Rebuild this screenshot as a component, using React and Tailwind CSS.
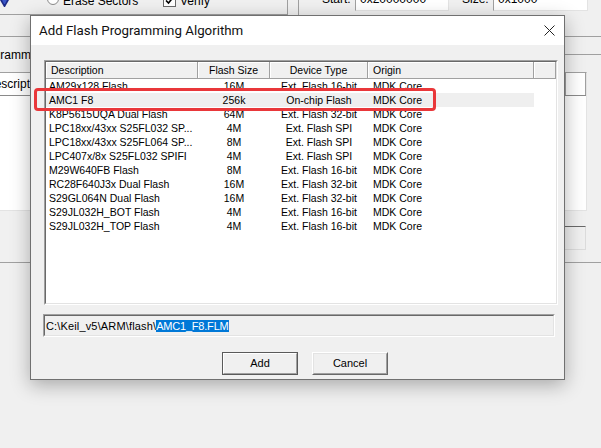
import React from "react";

const rows = [
  ["AM29x128 Flash", "16M", "Ext. Flash 16-bit", "MDK Core"],
  ["AMC1 F8", "256k", "On-chip Flash", "MDK Core"],
  ["K8P5615UQA Dual Flash", "64M", "Ext. Flash 32-bit", "MDK Core"],
  ["LPC18xx/43xx S25FL032 SP...", "4M", "Ext. Flash SPI", "MDK Core"],
  ["LPC18xx/43xx S25FL064 SP...", "8M", "Ext. Flash SPI", "MDK Core"],
  ["LPC407x/8x S25FL032 SPIFI", "4M", "Ext. Flash SPI", "MDK Core"],
  ["M29W640FB Flash", "8M", "Ext. Flash 16-bit", "MDK Core"],
  ["RC28F640J3x Dual Flash", "16M", "Ext. Flash 32-bit", "MDK Core"],
  ["S29GL064N Dual Flash", "16M", "Ext. Flash 32-bit", "MDK Core"],
  ["S29JL032H_BOT Flash", "4M", "Ext. Flash 16-bit", "MDK Core"],
  ["S29JL032H_TOP Flash", "4M", "Ext. Flash 16-bit", "MDK Core"],
];

function HeaderCell({ w, children, className = "" }) {
  return (
    <div
      className={`${w} h-full shrink-0 flex items-center border-r border-b border-r-[#a0a0a0] border-b-[#a0a0a0] shadow-[inset_1px_1px_0_#ffffff] bg-[#f0f0f0] ${className}`}
    >
      {children}
    </div>
  );
}

export default function App() {
  return (
    <div className="relative w-[601px] h-[448px] overflow-hidden bg-[#f0f0f0] text-black font-['Liberation_Sans',Arial,sans-serif]">
      {/* ===== Background window ===== */}
      <div className="flex flex-col">
        {/* top row */}
        <div className="flex h-[15px] text-[12px] leading-[14px]">
          <div className="w-[288px] h-full border-r border-b border-[#a0a0a0] flex items-start">
            <svg width="9" height="8" viewBox="0 0 9 8" className="shrink-0">
              <polygon points="0,0 9,0 5,7 4,7" fill="#1c2a86" />
              <polygon points="2,0 7,0 5,4 4,4" fill="#3a56c8" />
            </svg>
            <div className="ml-[38px] w-[116px] flex items-start">
              <div className="-mt-[7px] w-[12px] h-[12px] rounded-full border border-[#8a8a8a] bg-white shrink-0" />
              <span className="ml-[4px] -mt-[6px]">Erase Sectors</span>
            </div>
            <div className="-mt-[6px] w-[13px] h-[13px] border border-[#6a6a6a] bg-white shrink-0 flex items-center justify-center">
              <svg width="9" height="9" viewBox="0 0 9 9">
                <path d="M1 4.5 L3.5 7 L8 1.5" stroke="#000" strokeWidth="1.6" fill="none" />
              </svg>
            </div>
            <span className="ml-[4px] -mt-[6px]">Verify</span>
          </div>
          <div className="w-[11px] h-full border-r border-[#a0a0a0]" />
          <div className="flex items-start pl-[23px]">
            <span className="w-[33px] -mt-[8px]">Start:</span>
            <div className="w-[94px] h-[20px] -mt-[9px] bg-white border border-t-[#a0a0a0] border-l-[#a0a0a0] border-r-[#e3e3e3] border-b-[#e3e3e3] flex items-end pl-[4px] pb-[4px]">
              0x20000000
            </div>
            <span className="ml-[13px] w-[31px] -mt-[8px]">Size:</span>
            <div className="w-[95px] h-[20px] -mt-[9px] bg-white border border-t-[#a0a0a0] border-l-[#a0a0a0] border-r-[#e3e3e3] border-b-[#e3e3e3] flex items-end pl-[4px] pb-[4px]">
              0x1000
            </div>
          </div>
        </div>
        {/* group bottom line */}
        <div className="h-[22px] border-b border-[#a0a0a0]" />
        {/* group label row */}
        <div className="h-[35px] flex items-center text-[12px]">
          <span className="-ml-[25px] whitespace-nowrap">Programming Algorithm</span>
          <div className="ml-[6px] flex-1 h-px bg-[#a0a0a0]" />
        </div>
        {/* background list view */}
        <div className="-ml-[20px] w-[607px] h-[139px] border border-t-[#a0a0a0] border-l-[#a0a0a0] border-r-[#e3e3e3] border-b-[#e3e3e3] bg-white flex flex-col">
          <div className="h-[23px] flex text-[12px] border-b border-[#8a8a8a]">
            <div className="flex-1 flex items-center pl-[5px] border-r border-[#a0a0a0]">Description</div>
            <div className="w-[20px] border-r border-[#a0a0a0]" />
          </div>
          <div className="flex-1 bg-white" />
        </div>
        <div className="mt-[15px] flex">
          <div className="ml-[511px] w-[75px] h-[24px] border border-[#dcdcdc] border-t-[#696969] bg-[#f0f0f0]" />
        </div>
        <div className="mt-[12px] border-t border-[#a0a0a0] h-px bg-white" />
      </div>

      {/* ===== Dialog ===== */}
      <div className="absolute left-[30px] top-[15px] w-[535px] h-[365px] border border-[#707070] bg-[#f0f0f0] shadow-[0_5px_18px_rgba(0,0,0,0.3)] flex flex-col">
        {/* Title bar */}
        <div className="h-[29px] shrink-0 bg-white flex items-center justify-between pl-[8px] pr-[9px]">
          <span className="text-[13.3px] leading-[18px] pt-[1px] font-['Roboto',sans-serif] text-[#111]">
            Add Flash Programming Algorithm
          </span>
          <svg width="11" height="11" viewBox="0 0 11 11">
            <path d="M0.5 0.5 L10.5 10.5 M10.5 0.5 L0.5 10.5" stroke="#222" strokeWidth="1" />
          </svg>
        </div>

        {/* Body */}
        <div className="flex-1 flex flex-col">
          {/* List view */}
          <div className="ml-[13px] mt-[15px] w-[514px] h-[245px] border border-t-[#a0a0a0] border-l-[#a0a0a0] border-r-white border-b-white">
            <div className="w-full h-full border border-t-[#696969] border-l-[#696969] border-r-[#e3e3e3] border-b-[#e3e3e3] bg-white flex flex-col text-[10.5px] leading-[14px]">
              <div className="h-[17px] flex shrink-0">
                <HeaderCell w="w-[152px]" className="pl-[5px]">Description</HeaderCell>
                <HeaderCell w="w-[72px]" className="justify-center">Flash Size</HeaderCell>
                <HeaderCell w="w-[98px]" className="justify-center">Device Type</HeaderCell>
                <HeaderCell w="w-[166px]" className="pl-[5px]">Origin</HeaderCell>
                <HeaderCell w="flex-1" />
              </div>
              <div className="flex flex-col">
                {rows.map((r, i) => (
                  <div key={i} className="h-[14px] flex">
                    <div className={`flex ${i === 1 ? "bg-[#efefef]" : ""}`}>
                      <div className="w-[152px] pl-[3px] whitespace-nowrap">{r[0]}</div>
                      <div className="w-[72px] text-center">{r[1]}</div>
                      <div className="w-[98px] text-center whitespace-nowrap">{r[2]}</div>
                      <div className="w-[166px] pl-[5px]">{r[3]}</div>
                    </div>
                  </div>
                ))}
              </div>
            </div>
          </div>

          {/* Path box */}
          <div className="ml-[12px] mt-[9px] w-[512px] h-[23px] border border-t-[#a0a0a0] border-l-[#a0a0a0] border-r-white border-b-white">
            <div className="w-full h-full border border-t-[#696969] border-l-[#696969] border-r-[#e3e3e3] border-b-[#e3e3e3] bg-[#f0f0f0] flex items-center pl-[1px] text-[11px] leading-[12px] whitespace-nowrap">
              <span className="tracking-[0.15px]">{"C:\\Keil_v5\\ARM\\flash\\"}</span>
              <span className="bg-[#0078d7] text-white tracking-[-0.2px]">AMC1_F8.FLM</span>
            </div>
          </div>

          {/* Buttons */}
          <div className="mt-[15px] flex text-[11px]">
            <div className="ml-[191px] w-[76px] h-[23px] border border-[#5a5a5a]">
              <div className="w-full h-full border border-t-white border-l-white border-r-[#a0a0a0] border-b-[#a0a0a0] bg-[#f0f0f0] flex items-center justify-center">
                Add
              </div>
            </div>
            <div className="ml-[14px] w-[76px] h-[23px] border border-t-white border-l-white border-r-[#696969] border-b-[#696969]">
              <div className="w-full h-full border border-t-[#e3e3e3] border-l-[#e3e3e3] border-r-[#a0a0a0] border-b-[#a0a0a0] bg-[#f0f0f0] flex items-center justify-center">
                Cancel
              </div>
            </div>
          </div>
        </div>
      </div>

      {/* Red annotation */}
      <div className="absolute left-[34px] top-[88px] w-[402px] h-[23px] border-[3px] border-[#e9373a] rounded-[4px]" />
    </div>
  );
}
